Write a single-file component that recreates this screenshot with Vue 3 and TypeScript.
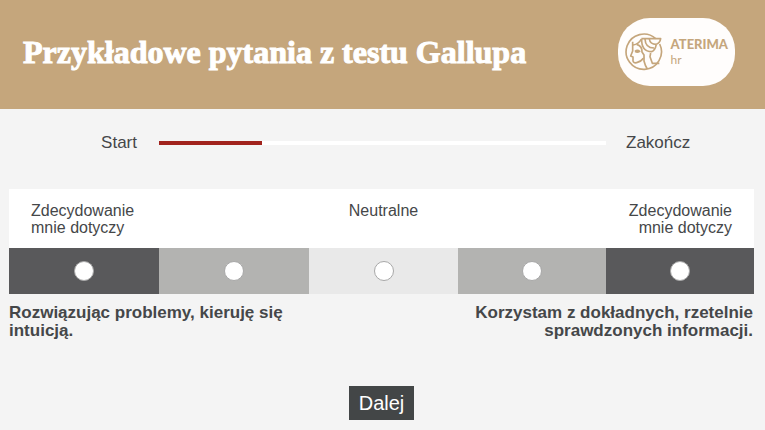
<script setup lang="ts">
import { ref } from 'vue'

interface Option {
  value: number
  label: string
  tone: 'dark' | 'mid' | 'light'
}

const options: Option[] = [
  { value: 1, label: 'Zdecydowanie mnie dotyczy', tone: 'dark' },
  { value: 2, label: '', tone: 'mid' },
  { value: 3, label: 'Neutralne', tone: 'light' },
  { value: 4, label: '', tone: 'mid' },
  { value: 5, label: 'Zdecydowanie mnie dotyczy', tone: 'dark' },
]

const answer = ref<number | null>(null)
const progress = ref(23)
</script>

<template>
  <div class="page">
    <header class="header">
      <h1 class="title">Przykładowe pytania z testu Gallupa</h1>
      <div class="brand">
        <svg class="emblem" viewBox="0 0 114 114" fill="none" stroke="#c5a67c" stroke-width="5" stroke-linejoin="round">
          <path d="M92 17A53 53 0 1 0 104 33" />
          <path d="M23 26V54L17 69L24 72V84Q25 91 35 89Q47 87 55 76" />
          <path d="M30 55Q37 49 44 55Q37 60 30 55" />
          <path d="M57 74V84Q60 97 67 108" />
          <path d="M77 60L75 71L82 91H103" />
          <path d="M24 36Q41 34 49 18" />
          <path d="M35 34Q52 39 51 57L57 66V76" />
          <path d="M49 17H107Q105 30 94 34" />
          <path d="M50 18Q49 56 80 56Q90 53 94 34" />
          <path d="M60 18Q61 45 87 45" />
          <path d="M73 18Q75 34 94 34" />
        </svg>
        <p class="wordmark"><strong>ATERIMA</strong><span>hr</span></p>
      </div>
    </header>

    <main class="survey">
      <div class="progress-row columns">
        <span class="start">Start</span>
        <progress class="bar" :value="progress" max="100" aria-label="Start – Zakończ"></progress>
        <span class="end">Zakończ</span>
      </div>

      <form @submit.prevent>
        <fieldset class="scale columns">
          <label v-for="option in options" :key="option.value" class="option">
            <span class="caption">{{ option.label }}</span>
            <span class="cell" :class="option.tone">
              <input v-model="answer" type="radio" name="answer" :value="option.value" />
            </span>
          </label>
        </fieldset>
        <div class="statements">
          <p>Rozwiązując problemy, kieruję się intuicją.</p>
          <p>Korzystam z dokładnych, rzetelnie sprawdzonych informacji.</p>
        </div>
        <button class="next" type="submit">Dalej</button>
      </form>
    </main>
  </div>
</template>

<style>
body {
  margin: 0;
  background: #f4f4f4;
}
</style>

<style scoped>
.page {
  color: #454749;
  font-family: "Liberation Sans", Arial, sans-serif;
}

.header {
  display: flex;
  align-items: center;
  justify-content: space-between;
  padding: 18px 30px 23px 23px;
  background: #c5a67c;
}

.title {
  margin: 0;
  color: #fff;
  font: 700 32px/40px "Liberation Serif", serif;
  -webkit-text-stroke: 1px #fff;
}

.brand {
  display: flex;
  align-items: center;
  gap: 8px;
  box-sizing: border-box;
  height: 68px;
  padding: 0 7px;
  border-radius: 32px;
  background: #fffdfc;
}

.emblem {
  width: 38px;
  height: 38px;
}

.wordmark {
  display: flex;
  flex-direction: column;
  margin: 0;
  color: #c5a67c;
  font: 12px/16px Lato, sans-serif;
}

.wordmark strong {
  font-size: 13px;
  font-weight: 900;
}

.survey {
  padding: 24px 11px 10px 9px;
}

.columns {
  display: grid;
  grid-template-columns: 150fr 150fr 149fr 148fr 148fr;
}

.progress-row {
  align-items: center;
  margin-bottom: 36px;
  font-size: 17px;
  line-height: 20px;
}

.start {
  padding-right: 22px;
  text-align: right;
}

.end {
  padding-left: 20px;
}

.bar {
  grid-column: span 3;
  width: 100%;
  height: 4px;
  border: 0;
  appearance: none;
  background: #fff;
}

.bar::-webkit-progress-bar {
  background: #fff;
}

.bar::-webkit-progress-value {
  background: #a1231d;
}

.scale {
  min-width: 0;
  margin: 0;
  padding: 0;
  border: 0;
  background: #fff;
}

.option {
  display: flex;
  flex-direction: column;
  justify-content: space-between;
}

.caption {
  padding: 13px 22px 12px;
  font-size: 16px;
  line-height: 17px;
  text-align: center;
}

.option:first-child .caption {
  text-align: left;
}

.option:last-child .caption {
  text-align: right;
}

.cell {
  display: flex;
  align-items: center;
  justify-content: center;
  height: 46px;
}

.dark {
  background: #59595b;
}

.mid {
  background: #b3b3b1;
}

.light {
  background: #e9e9e9;
}

.cell input {
  box-sizing: border-box;
  width: 20px;
  height: 20px;
  margin: 0;
  border: 1px solid #a8a8a8;
  border-radius: 50%;
  appearance: none;
  background: #fff;
}

.cell input:checked {
  background: radial-gradient(#59595b 4px, #fff 5px);
}

.statements {
  display: flex;
  justify-content: space-between;
  margin: 10px 1px 46px 0;
  font-size: 17px;
  font-weight: 700;
  line-height: 18px;
}

.statements p {
  flex: 0 1 290px;
  margin: 0;
}

.statements p:last-child {
  text-align: right;
}

.next {
  display: block;
  margin: 0 auto;
  padding: 5px 10px;
  border: 0;
  background: #434647;
  color: #fff;
  font: 20px/24px "Liberation Sans", Arial, sans-serif;
}
</style>
